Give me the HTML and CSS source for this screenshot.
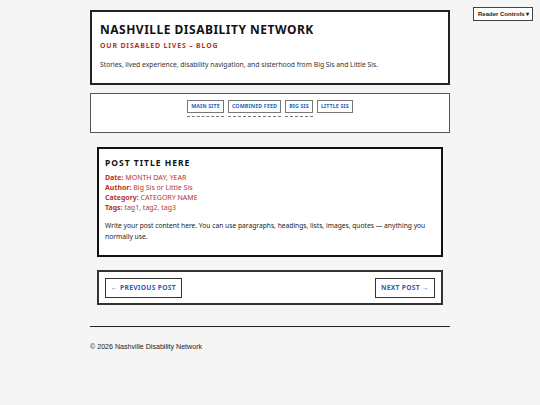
FILE: index.html
```html
<!DOCTYPE html>
<html lang="en">
<head>
<meta charset="utf-8">
<title>Nashville Disability Network – Blog Post</title>
<link rel="stylesheet" href="styles.css">
</head>
<body>
<button class="reader-btn">Reader Controls ▾</button>
<div class="page">
  <header class="site-header">
    <h1 class="site-title">Nashville Disability Network</h1>
    <p class="site-sub">Our Disabled Lives – Blog</p>
    <p class="site-desc">Stories, lived experience, disability navigation, and sisterhood from Big Sis and Little Sis.</p>
  </header>
  <nav class="site-nav">
    <ul class="nav-list">
      <li class="nav-item dashed"><a href="#" class="nav-link">Main Site</a></li>
      <li class="nav-item dashed"><a href="#" class="nav-link">Combined Feed</a></li>
      <li class="nav-item dashed"><a href="#" class="nav-link">Big Sis</a></li>
      <li class="nav-item"><a href="#" class="nav-link">Little Sis</a></li>
    </ul>
  </nav>
  <article class="post">
    <h2 class="post-title">Post Title Here</h2>
    <div class="meta">
      <div><b>Date:</b> MONTH DAY, YEAR</div>
      <div><b>Author:</b> Big Sis or Little Sis</div>
      <div><b>Category:</b> CATEGORY NAME</div>
      <div><b>Tags:</b> tag1, tag2, tag3</div>
    </div>
    <p class="post-body">Write your post content here. You can use paragraphs, headings, lists, images, quotes — anything you normally use.</p>
  </article>
  <div class="pager">
    <a href="#" class="pager-link">← Previous Post</a>
    <a href="#" class="pager-link">Next Post →</a>
  </div>
  <footer class="site-footer">
    <p>© 2026 Nashville Disability Network</p>
  </footer>
</div>
</body>
</html>
```
FILE: styles.css
```css
html, body {
  margin: 0;
  padding: 0;
  background: #f5f5f5;
}
body {
  font-family: "Noto Sans", "Open Sans", sans-serif;
  color: #222;
}
.reader-btn {
  position: absolute;
  top: 7px;
  right: 7px;
  font-family: "Liberation Sans", Arial, sans-serif;
  font-weight: bold;
  font-size: 6px;
  background: #fff;
  color: #222;
  border: 1px solid #444;
  padding: 0 4px;
  height: 14px;
  width: 60px;
  line-height: 12px;
  white-space: nowrap;
  box-sizing: border-box;
}
.page {
  width: 360px;
  margin: 10px auto 0;
}
.site-header {
  background: #fff;
  border: 2px solid #222;
  padding: 11px 8px 13px;
  height: 75px;
  box-sizing: border-box;
}
.site-title {
  margin: 0;
  font-size: 12px;
  line-height: 14px;
  letter-spacing: 0.5px;
  text-transform: uppercase;
  font-weight: 700;
  color: #111;
}
.site-sub {
  margin: 4px 0 0;
  font-size: 7px;
  line-height: 10px;
  letter-spacing: 0.8px;
  text-transform: uppercase;
  font-weight: 700;
  color: #b3352b;
}
.site-desc {
  margin: 9px 0 0;
  font-size: 6.75px;
  line-height: 10px;
  color: #333;
}
.site-nav {
  margin-top: 8px;
  background: #fff;
  border: 1.5px solid #555;
  height: 40px;
  box-sizing: border-box;
  padding-top: 6px;
}
.nav-list {
  list-style: none;
  margin: 0;
  padding: 0;
  display: flex;
  justify-content: center;
  gap: 4px;
}
.nav-item {
  padding-bottom: 3px;
}
.nav-item.dashed {
  border-bottom: 1px dashed #777;
}
.nav-link {
  display: block;
  border: 1px solid #777;
  padding: 2px 3px 1.5px;
  font-size: 5.3px;
  line-height: 7px;
  font-weight: 700;
  color: #1f5fbf;
  text-decoration: none;
  text-transform: uppercase;
  letter-spacing: 0.15px;
}
.post {
  margin: 14px 7px 0;
  background: #fff;
  border: 2px solid #111;
  padding: 8px 6px 8px;
  height: 110px;
  box-sizing: border-box;
}
.post-title {
  margin: 0;
  font-size: 8.5px;
  line-height: 12px;
  letter-spacing: 1px;
  text-transform: uppercase;
  font-weight: 700;
  color: #111;
}
.meta {
  margin-top: 4px;
  font-size: 7px;
  line-height: 10px;
  color: #b3352b;
}
.post-body {
  margin: 7px 0 0;
  font-size: 6.7px;
  line-height: 11px;
  color: #222;
}
.pager {
  margin: 13px 7px 0;
  background: #fff;
  border: 2px solid #333;
  height: 35px;
  box-sizing: border-box;
  padding: 0 6px;
  display: flex;
  align-items: center;
  justify-content: space-between;
}
.pager-link {
  display: block;
  border: 1.5px solid #333;
  padding: 5px 5px;
  font-size: 6.7px;
  line-height: 8px;
  font-weight: 700;
  letter-spacing: 0.3px;
  text-transform: uppercase;
  color: #1f5fbf;
  text-decoration: none;
}
.site-footer {
  margin-top: 21px;
  border-top: 1px solid #222;
  padding-top: 15px;
}
.site-footer p {
  margin: 0;
  font-family: "Liberation Sans", Arial, sans-serif;
  font-size: 7.1px;
  line-height: 10px;
  color: #222;
}
```
